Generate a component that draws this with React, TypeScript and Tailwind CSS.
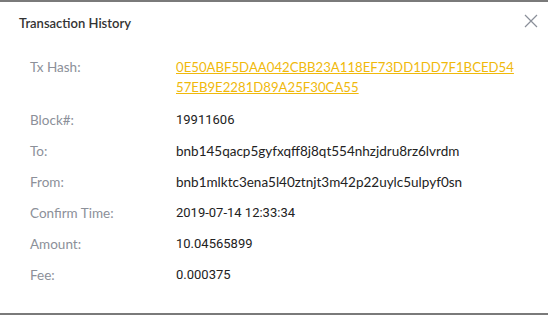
import React from "react";

const rows: { label: string; value: string; num?: boolean }[] = [
  { label: "Block#:", value: "19911606", num: true },
  { label: "To:", value: "bnb145qacp5gyfxqff8j8qt554nhzjdru8rz6lvrdm" },
  { label: "From:", value: "bnb1mlktc3ena5l40ztnjt3m42p22uylc5ulpyf0sn" },
  { label: "Confirm Time:", value: "2019-07-14 12:33:34", num: true },
  { label: "Amount:", value: "10.04565899", num: true },
  { label: "Fee:", value: "0.000375", num: true },
];

export default function App() {
  return (
    <div className="w-[548px] h-[315px] bg-white flex flex-col font-['Lato',sans-serif]">
      <div className="h-[2px] bg-[#7a7a7a]" />
      <div className="flex-1 flex flex-col">
        <div className="flex items-center justify-between pl-[19px] pr-[10px] h-[40px]">
          <div className="text-[13px] text-[#333] font-semibold mt-[3px]">Transaction History</div>
          <svg width="14" height="14" viewBox="0 0 14 14" className="mt-[-2px]">
            <path d="M1 1 L13 13 M13 1 L1 13" stroke="#8a8f99" strokeWidth="1.2" fill="none" />
          </svg>
        </div>
        <div className="flex flex-col pl-[30px] pt-[15px] text-[13.5px]">
          <div className="flex">
            <div className="w-[146px] text-[#8c9099] leading-[20px]">Tx Hash:</div>
            <div className="text-[#f0b90b] underline leading-[20px] text-[13.2px]">
              0E50ABF5DAA042CBB23A118EF73DD1DD7F1BCED54
              <br />
              57EB9E2281D89A25F30CA55
            </div>
          </div>
          {rows.map((r, i) => (
            <div key={r.label} className={"flex " + (i === 0 ? "mt-[13px]" : "mt-[11px]")}>
              <div className="w-[146px] text-[#8c9099] leading-[20px]">{r.label}</div>
              <div className={"text-[#222] leading-[20px] " + (r.num ? "font-['Roboto',sans-serif] text-[13px]" : "")}>{r.value}</div>
            </div>
          ))}
        </div>
      </div>
      <div className="h-[2px] bg-[#7a7a7a]" />
    </div>
  );
}
